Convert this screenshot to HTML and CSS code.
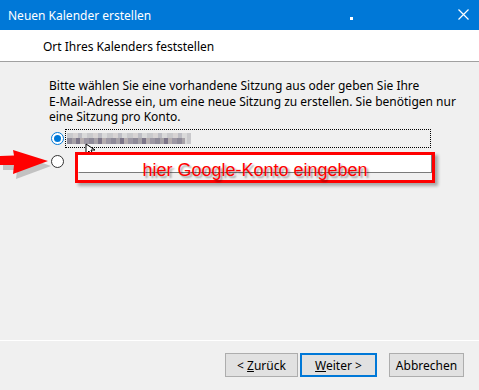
FILE: index.html
```html
<!DOCTYPE html>
<html lang="de">
<head>
    <meta charset="UTF-8">
    <title>Neuen Kalender erstellen</title>
    <link rel="stylesheet" href="styles.css">
</head>
<body>
    <div class="window">
        <div class="titlebar">
            <span class="title">Neuen Kalender erstellen</span>
            <span class="dot"></span>
            <svg class="close" width="11" height="11" viewBox="0 0 11 11">
                <path d="M0.5 0.5 L10.5 10.5 M10.5 0.5 L0.5 10.5" stroke="#fff" stroke-width="1.2"/>
            </svg>
        </div>
        <div class="header">Ort Ihres Kalenders feststellen</div>
        <div class="content">
            <p class="intro">Bitte wählen Sie eine vorhandene Sitzung aus oder geben Sie Ihre<br>
                E-Mail-Adresse ein, um eine neue Sitzung zu erstellen. Sie benötigen nur<br>
                eine Sitzung pro Konto.</p>
            <div class="row row-first">
                <span class="radio checked"></span>
                <div class="session">
                    <span class="blur"></span>
                </div>
                <svg class="cursor" width="14" height="14" viewBox="0 0 14 14">
                    <path d="M1 1 L1 11 L4 8 L6 13 L8 12 L6 7 L10 7 Z" fill="#fff" stroke="#000" stroke-width="1"/>
                </svg>
            </div>
            <div class="row row-second">
                <span class="radio"></span>
                <div class="account">
                    <input type="text" class="account-input">
                    <div class="annotation">hier Google-Konto eingeben</div>
                </div>
            </div>
            <svg class="arrow" width="52" height="32" viewBox="0 0 52 32">
                <path d="M1 8 L15 7 L14 1 L49 13 L14 26 L15 17 L1 17 Z" fill="#8a8a8a" opacity="0.45" transform="translate(2,3)"/>
                <path d="M0 6 L14 5.5 L13 0 L48 11 L13 24 L14 15 L0 15 Z" fill="#f00"/>
            </svg>
        </div>
        <div class="footer">
            <button class="btn">&lt; <u>Z</u>urück</button>
            <button class="btn btn-default"><u>W</u>eiter &gt;</button>
            <button class="btn btn-cancel">Abbrechen</button>
        </div>
    </div>
</body>
</html>
```

FILE: styles.css
```css
body {
    margin: 0;
    font-family: "Noto Sans", "Liberation Sans", sans-serif;
    font-size: 12px;
    background-color: #f0f0f0;
}

.window {
    width: 479px;
    height: 390px;
    display: flex;
    flex-direction: column;
    background-color: #f0f0f0;
    position: relative;
    overflow: hidden;
}

.titlebar {
    height: 30px;
    background-color: #0078d7;
    color: #fff;
    display: flex;
    align-items: center;
    padding-left: 8px;
    position: relative;
}

.title {
    font-size: 12px;
}

.dot {
    position: absolute;
    left: 350px;
    top: 17px;
    width: 3px;
    height: 3px;
    background-color: #fff;
}

.close {
    position: absolute;
    left: 458px;
    top: 9px;
}

.header {
    height: 31px;
    background-color: #fff;
    border-bottom: 1px solid #a0a0a0;
    padding-left: 43px;
    line-height: 33px;
    color: #000;
}

.content {
    position: relative;
    flex: 1;
    padding-left: 51px;
}

.intro {
    margin: 16px 0 0 -2px;
    line-height: 15.5px;
    color: #000;
    white-space: nowrap;
}

.row {
    display: flex;
    align-items: center;
    position: relative;
}

.row-first {
    margin-top: 4px;
    height: 19px;
}

.row-second {
    margin-top: 4px;
    align-items: flex-start;
}

.radio {
    width: 11px;
    height: 11px;
    border: 1px solid #333;
    border-radius: 50%;
    background-color: #fff;
    flex: none;
    box-sizing: content-box;
    position: relative;
}

.radio.checked {
    border-color: #0078d7;
}

.radio.checked::after {
    content: "";
    position: absolute;
    left: 2px;
    top: 2px;
    width: 7px;
    height: 7px;
    border-radius: 50%;
    background-color: #0078d7;
}

.row-second .radio {
    margin-top: 3px;
}

.session {
    margin-left: 1px;
    width: 364px;
    height: 17px;
    border: 1px dotted #000;
    display: flex;
    align-items: center;
}

.blur {
    margin-left: 1px;
    width: 124px;
    height: 11px;
    background:
        repeating-linear-gradient(90deg, #c9c9cc 0 6px, #d8d4d4 6px 11px, #bdbdc4 11px 15px, #dadada 15px 20px),
        #ccc;
    position: relative;
}

.blur::after {
    content: "";
    position: absolute;
    left: 0;
    right: 6px;
    bottom: 0;
    height: 6px;
    background: repeating-linear-gradient(90deg, #8e8a98 0 5px, #a7a2a8 5px 9px, #7c7588 9px 13px, #b6aeb0 13px 17px, #9d98a4 17px 22px);
}

.cursor {
    position: absolute;
    left: 34px;
    top: 14px;
}

.account {
    position: relative;
    margin-left: 13px;
    width: 359px;
    height: 30px;
}

.account-input {
    display: block;
    margin: 1px 0 0 1px;
    width: 354px;
    height: 20px;
    box-sizing: border-box;
    border: 1px solid #7a7a7a;
    border-top-color: #fff;
    border-left-color: #fff;
    background-color: #fff;
    padding: 0;
}

.annotation {
    position: absolute;
    left: -2px;
    top: 0;
    width: 360px;
    height: 31px;
    box-sizing: border-box;
    border: 3px solid #f00;
    box-shadow: 3px 3px 3px rgba(0, 0, 0, 0.3);
    color: #f00;
    font-family: "Liberation Sans", Arial, sans-serif;
    font-size: 18px;
    text-align: center;
    line-height: 31px;
    text-shadow: 2px 2px 2px rgba(0, 0, 0, 0.35);
}

.arrow {
    position: absolute;
    left: 0;
    top: 88px;
}

.footer {
    height: 50px;
    border-top: 1px solid #fff;
    display: flex;
    align-items: flex-start;
    padding: 12px 0 0 225px;
    box-sizing: border-box;
}

.btn {
    font-family: "Noto Sans", "Liberation Sans", sans-serif;
    font-size: 12px;
    color: #000;
    background-color: #e1e1e1;
    border: 1px solid #adadad;
    width: 73px;
    height: 24px;
    padding: 0;
    margin-right: 2px;
}

.btn-default {
    border: 2px solid #0078d7;
    width: 77px;
}

.btn-cancel {
    margin-left: 10px;
    width: 75px;
}
```
